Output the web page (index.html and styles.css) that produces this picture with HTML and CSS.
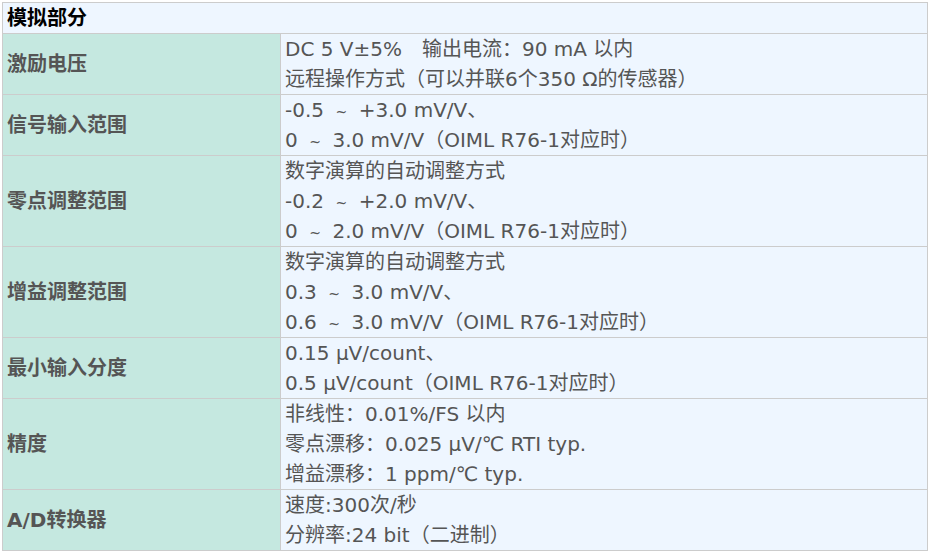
FILE: index.html
```html
<!DOCTYPE html>
<html lang="zh-CN">
<head>
<meta charset="utf-8">
<title>模拟部分</title>
<link rel="stylesheet" href="styles.css">
</head>
<body>
<table class="spec">
  <colgroup><col class="c-label"><col class="c-value"></colgroup>
  <thead>
    <tr><th class="head" colspan="2">模拟部分</th></tr>
  </thead>
  <tbody>
    <tr><th class="label">激励电压</th><td class="value">DC 5 V±5%　输出电流：90 mA 以内<br>远程操作方式（可以并联6个350 Ω的传感器）</td></tr>
    <tr><th class="label">信号输入范围</th><td class="value">-0.5 <span class="wave">~</span> +3.0 mV/V、<br>0 <span class="wave">~</span> 3.0 mV/V（OIML R76-1对应时）</td></tr>
    <tr><th class="label">零点调整范围</th><td class="value">数字演算的自动调整方式<br>-0.2 <span class="wave">~</span> +2.0 mV/V、<br>0 <span class="wave">~</span> 2.0 mV/V（OIML R76-1对应时）</td></tr>
    <tr><th class="label">增益调整范围</th><td class="value">数字演算的自动调整方式<br>0.3 <span class="wave">~</span> 3.0 mV/V、<br>0.6 <span class="wave">~</span> 3.0 mV/V（OIML R76-1对应时）</td></tr>
    <tr><th class="label">最小输入分度</th><td class="value">0.15 µV/count、<br>0.5 µV/count（OIML R76-1对应时）</td></tr>
    <tr><th class="label">精度</th><td class="value">非线性：0.01%/FS 以内<br>零点漂移：0.025 µV/℃ RTI typ.<br>增益漂移：1 ppm/℃ typ.</td></tr>
    <tr><th class="label">A/D转换器</th><td class="value">速度:300次/秒<br>分辨率:24 bit（二进制）</td></tr>
  </tbody>
</table>
</body>
</html>
```
FILE: styles.css
```css
html, body {
  margin: 0;
  padding: 0;
  background: #ffffff;
}
body {
  padding: 2px;
  font-family: "DejaVu Sans", "Noto Sans CJK SC", sans-serif;
  font-size: 20px;
  line-height: 30px;
  color: #555555;
}
.spec {
  border-spacing: 0;
  table-layout: fixed;
  width: 926px;
  border-top: 1px solid #cccccc;
  border-left: 1px solid #cccccc;
}
.c-label { width: 278px; }
.c-value { width: 647px; }
.spec th,
.spec td {
  border-right: 1px solid #cccccc;
  border-bottom: 1px solid #cccccc;
  padding: 0 4px;
  text-align: left;
  vertical-align: middle;
  white-space: nowrap;
}
.head {
  background: #eef6ff;
  color: #000000;
  font-weight: bold;
}
.label {
  background: #c5e8e0;
  color: #555555;
  font-weight: bold;
}
.value {
  background: #eef6ff;
  font-weight: normal;
}
.wave {
  display: inline-block;
  width: 22px;
  text-align: center;
  font-size: 14px;
  line-height: 1;
  vertical-align: 0;
}
```
